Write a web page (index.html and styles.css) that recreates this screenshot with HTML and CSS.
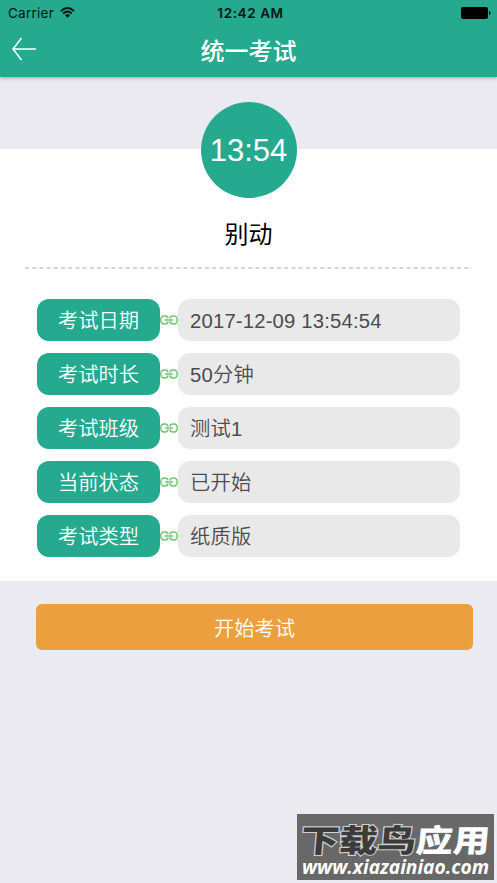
FILE: index.html
```html
<!DOCTYPE html>
<html lang="zh-CN">
<head>
    <meta charset="UTF-8">
    <meta name="viewport" content="width=device-width, initial-scale=1.0">
    <title>统一考试</title>
    <link rel="stylesheet" href="styles.css">
</head>
<body>
    <!-- Shared link icon -->
    <svg class="symbols" width="0" height="0">
        <symbol id="link" viewBox="0 0 18 10">
            <path d="M8 3.4Q7.8 .9 5.2 .9H4.2Q.8 .9 .8 4.9T4.2 8.9H5.2Q7.8 8.9 8 6.4M10 3.4Q10.2 .9 12.8 .9H13.8Q17.2 .9 17.2 4.9T13.8 8.9H12.8Q10.2 8.9 10 6.4M5 4.9H13"/>
        </symbol>
    </svg>

    <!-- Status bar and title -->
    <header class="header">
        <div class="status-bar">
            <div class="carrier">
                <span>Carrier</span>
                <svg class="wifi" viewBox="0 0 15 11">
                    <path d="M.9 4.1Q7.5 -2 14.1 4.1M3.2 6.5Q7.5 2.6 11.8 6.5"/>
                    <path class="wifi-dot" d="M5 8.2Q7.5 6 10 8.2L7.5 10.8Z"/>
                </svg>
            </div>
            <div class="clock">12:42 AM</div>
            <svg class="battery" viewBox="0 0 30 12">
                <rect x="0" y="0" width="27" height="12" rx="2"/>
                <path d="M28 4Q29.6 4.5 29.6 6T28 8Z"/>
            </svg>
        </div>
        <div class="title-bar">
            <svg class="back" viewBox="0 0 24 24">
                <path d="M9.5 1L1 12L9.5 23M1 12H24"/>
            </svg>
            <h1>统一考试</h1>
        </div>
    </header>

    <!-- Exam details -->
    <main class="card">
        <div class="time-circle">13:54</div>
        <h2>别动</h2>
        <svg class="divider" viewBox="0 0 447 2">
            <path d="M0 1H447"/>
        </svg>
        <div class="rows">
            <div class="row">
                <div class="label">考试日期</div>
                <svg class="link"><use href="#link"/></svg>
                <div class="value">2017-12-09 13:54:54</div>
            </div>
            <div class="row">
                <div class="label">考试时长</div>
                <svg class="link"><use href="#link"/></svg>
                <div class="value">50分钟</div>
            </div>
            <div class="row">
                <div class="label">考试班级</div>
                <svg class="link"><use href="#link"/></svg>
                <div class="value">测试1</div>
            </div>
            <div class="row">
                <div class="label">当前状态</div>
                <svg class="link"><use href="#link"/></svg>
                <div class="value">已开始</div>
            </div>
            <div class="row">
                <div class="label">考试类型</div>
                <svg class="link"><use href="#link"/></svg>
                <div class="value">纸质版</div>
            </div>
        </div>
    </main>

    <button class="start" type="button">开始考试</button>

    <!-- Site badge in the corner -->
    <svg class="badge" viewBox="0 0 197 66">
        <g transform="translate(3 38) skewX(-5) scale(1 .9)">
            <text class="badge-name badge-dark" x="0" y="0" textLength="115" lengthAdjust="spacingAndGlyphs">下载鸟</text>
            <text class="badge-name badge-light" x="115" y="0" textLength="74" lengthAdjust="spacingAndGlyphs">应用</text>
        </g>
        <text class="badge-url" x="5" y="60" textLength="187" lengthAdjust="spacingAndGlyphs">www.xiazainiao.com</text>
    </svg>
</body>
</html>
```

FILE: styles.css
```css
* {
    box-sizing: border-box;
}

body {
    margin: 0;
    height: 883px;
    overflow: hidden;
    background-color: #ebeaf0;
    font-family: "Liberation Sans", "Noto Sans CJK SC", sans-serif;
}

.symbols {
    display: block;
}

/* Green header */
.header {
    height: 77px;
    background-color: #25a98f;
    box-shadow: 0 1px 4px rgba(0, 0, 0, 0.3);
}

.status-bar {
    display: grid;
    grid-template-columns: 1fr auto 1fr;
    align-items: center;
    height: 26px;
    padding: 0 6px 0 8px;
    font-family: Inter, sans-serif;
    font-size: 13px;
    color: #061512;
}

.carrier {
    display: flex;
    align-items: center;
    gap: 6px;
    font-size: 13.5px;
    letter-spacing: 0.25px;
}

.wifi {
    width: 15px;
    height: 11px;
    margin-top: -2px;
    fill: none;
    stroke: #061512;
    stroke-width: 1.8;
}

.wifi .wifi-dot {
    fill: #061512;
    stroke: none;
}

.clock {
    padding-left: 2px;
    font-size: 13.5px;
    font-weight: 600;
    letter-spacing: 0.6px;
}

.battery {
    justify-self: end;
    width: 30px;
    height: 12px;
    fill: #000;
}

.title-bar {
    display: grid;
    grid-template-columns: 24px 1fr 24px;
    align-items: center;
    height: 46px;
    padding: 0 12px;
}

.back {
    width: 24px;
    height: 24px;
    fill: none;
    stroke: #fff;
    stroke-width: 1.5;
}

h1 {
    margin: 5px 0 0;
    color: #fff;
    font-size: 24px;
    font-weight: 500;
    line-height: 36px;
    text-align: center;
}

/* White card */
.card {
    display: flex;
    flex-direction: column;
    align-items: center;
    height: 432px;
    margin-top: 72px;
    background-color: #fff;
}

.time-circle {
    width: 96px;
    height: 96px;
    margin-top: -47px;
    border-radius: 50%;
    background-color: #25a98f;
    color: #fff;
    font-size: 31px;
    line-height: 97px;
    text-align: center;
}

h2 {
    margin: 19px 0 0;
    color: #000;
    font-size: 24px;
    font-weight: 400;
    line-height: 36px;
}

.divider {
    width: 447px;
    height: 2px;
    margin-top: 14px;
    stroke: #aaa;
    stroke-width: 1.2;
    stroke-dasharray: 4 3.2;
}

/* Label / value rows */
.rows {
    display: flex;
    flex-direction: column;
    gap: 12px;
    margin-top: 30px;
    width: 423px;
}

.row {
    display: flex;
    align-items: center;
    height: 42px;
    font-size: 20.3px;
    line-height: 44px;
}

.label {
    width: 123px;
    height: 42px;
    border-radius: 12px;
    background-color: #25a98f;
    color: #fff;
    font-weight: 350;
    text-align: center;
}

.link {
    width: 18px;
    height: 10px;
    fill: none;
    stroke: #72c574;
    stroke-width: 1.5;
}

.value {
    flex: 1;
    height: 42px;
    padding-left: 12px;
    border-radius: 12px;
    background-color: #e9e9e9;
    color: #4c4c4c;
    font-weight: 350;
    letter-spacing: 0.18px;
}

.start {
    display: block;
    width: 437px;
    height: 46px;
    margin: 23px 0 0 36px;
    padding: 0;
    border: none;
    border-radius: 6px;
    background-color: #eb9f3e;
    color: #fff;
    font-family: "Noto Sans CJK SC", sans-serif;
    font-size: 20.3px;
    font-weight: 350;
}

/* Overlaid badge */
.badge {
    position: absolute;
    right: 3px;
    bottom: 3px;
    width: 197px;
    height: 66px;
    background-color: #686868;
}

.badge-name {
    font-family: "Noto Sans CJK SC", sans-serif;
    font-size: 35px;
    font-weight: 900;
    paint-order: stroke;
}

.badge-dark {
    fill: #3c3c3c;
    stroke: #d0d0d0;
    stroke-width: 2.4;
}

.badge-light {
    fill: #fff;
}

.badge-url {
    fill: #fff;
    font-family: "Open Sans", sans-serif;
    font-size: 19px;
    font-style: italic;
    font-weight: 700;
}
```
